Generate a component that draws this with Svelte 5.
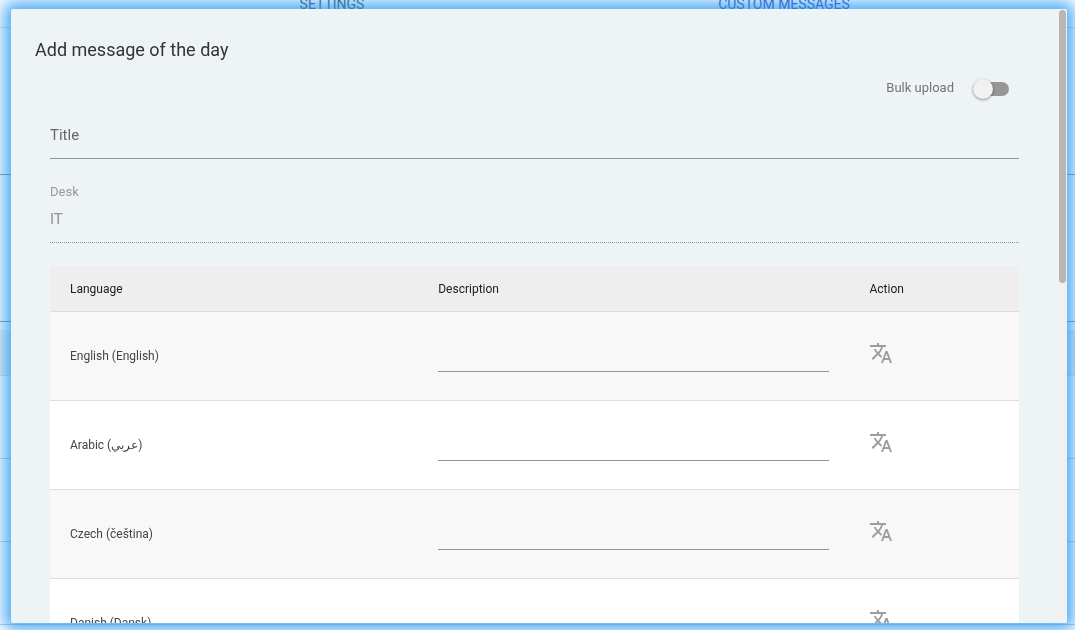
<script lang="ts">
	type Translation = {
		code: string;
		label: string;
		text: string;
	};

	let bulkUpload = $state(false);
	let title = $state('');
	let desk = $state('IT');
	let translations = $state<Translation[]>([
		{ code: 'en', label: 'English (English)', text: '' },
		{ code: 'ar', label: 'Arabic (عربي)', text: '' },
		{ code: 'cs', label: 'Czech (čeština)', text: '' },
		{ code: 'da', label: 'Danish (Dansk)', text: '' }
	]);
</script>

<div class="page">
	<nav class="tabs">
		<a href="#settings">SETTINGS</a>
		<a href="#messages" class="active">CUSTOM MESSAGES</a>
	</nav>
	<div class="section"></div>
	<div class="section"></div>
	<div class="list">
		<div class="list-head"></div>
		<div class="list-row"></div>
		<div class="list-row"></div>
		<div class="list-row"></div>
	</div>
</div>

<div class="dialog" role="dialog" aria-labelledby="dialog-title">
	<div class="content">
		<h2 id="dialog-title">Add message of the day</h2>
		<form>
			<label class="bulk">
				<span>Bulk upload</span>
				<input type="checkbox" class="switch" bind:checked={bulkUpload} />
			</label>

			<input class="field" type="text" aria-label="Title" placeholder="Title" bind:value={title} />

			<label class="desk-label" for="desk">Desk</label>
			<input class="field desk" id="desk" type="text" bind:value={desk} disabled />

			<table>
				<thead>
					<tr>
						<th class="language">Language</th>
						<th class="description">Description</th>
						<th>Action</th>
					</tr>
				</thead>
				<tbody>
					{#each translations as item (item.code)}
						<tr>
							<td>{item.label}</td>
							<td>
								<input type="text" class="text" aria-label="Description, {item.label}" bind:value={item.text} />
							</td>
							<td>
								<button type="button" aria-label="Translate {item.label}">
									<svg viewBox="0 0 24 24" width="24" height="24" aria-hidden="true">
										<path
											d="M12.87 15.07l-2.54-2.51.03-.03c1.74-1.94 2.98-4.17 3.71-6.53H17V4h-7V2H8v2H1v1.99h11.17C11.5 7.92 10.44 9.75 9 11.35 8.07 10.32 7.3 9.19 6.69 8h-2c.73 1.63 1.73 3.17 2.98 4.56l-5.09 5.02L4 19l5-5 3.11 3.11.76-2.04zM18.5 10h-2L12 22h2l1.12-3h4.75L21 22h2l-4.5-12zm-2.62 7l1.62-4.33L19.12 17h-3.24z"
										/>
									</svg>
								</button>
							</td>
						</tr>
					{/each}
				</tbody>
			</table>
		</form>
	</div>
	<div class="scrollbar"><div class="thumb"></div></div>
</div>

<style>
	:global(body) {
		font-family: Roboto, 'Liberation Serif', serif;
		background: #fff;
	}
	* {
		box-sizing: border-box;
	}
	.page {
		height: 100vh;
		overflow: hidden;
	}
	.tabs {
		display: grid;
		grid-template-columns: 1fr 1fr;
		height: 48px;
		margin-top: -20px;
		padding: 0 65px 0 106px;
		align-items: center;
		border-bottom: 1px solid #dadada;
	}
	.tabs a {
		color: #555;
		font-size: 14px;
		text-align: center;
		text-decoration: none;
	}
	.tabs a.active {
		color: #3f51b5;
	}
	.section {
		height: 147px;
		border-bottom: 1px solid #949494;
	}
	.list {
		padding-top: 8px;
	}
	.list-head {
		height: 46px;
		background: #eee;
		border-bottom: 1px solid #ddd;
	}
	.list-row {
		height: 83px;
		border-bottom: 1px solid #ccc;
	}

	.dialog {
		position: fixed;
		inset: 9px 8px 7px 11px;
		display: flex;
		overflow: hidden;
		background: #eef3f6;
		border-radius: 2px;
		box-shadow: 0 0 16px 7px rgba(33, 150, 243, 0.8);
	}
	.content {
		flex: 1;
		min-width: 0;
		padding: 24px;
		overflow: hidden;
	}
	h2 {
		margin: 0;
		color: #333;
		font-size: 18px;
		font-weight: 400;
		line-height: 34px;
	}
	form {
		padding: 0 16px 0 15px;
	}
	.bulk {
		display: flex;
		align-items: center;
		justify-content: flex-end;
		gap: 19px;
		height: 44px;
		padding-right: 10px;
		color: #757575;
		font-size: 13px;
		line-height: 16px;
	}
	.bulk span {
		padding-bottom: 2px;
	}
	.switch {
		position: relative;
		width: 36px;
		height: 14px;
		margin: 0;
		appearance: none;
		background: #969696;
		border-radius: 7px;
	}
	.switch::before {
		content: '';
		position: absolute;
		top: -3px;
		left: 0;
		width: 20px;
		height: 20px;
		background: #f1f1f1;
		border-radius: 50%;
		box-shadow: 0 1px 3px rgba(0, 0, 0, 0.4);
	}
	.switch:checked::before {
		left: 16px;
	}
	input[type='text'] {
		display: block;
		width: 100%;
		padding: 0;
		background: none;
		border: 0;
		border-bottom: 1px solid #949494;
		color: #333;
		font-family: inherit;
		outline: none;
	}
	input.field {
		height: 48px;
		font-size: 15px;
	}
	.field::placeholder {
		color: #666;
		opacity: 1;
	}
	.desk-label {
		display: block;
		margin-top: 25px;
		color: #999;
		font-size: 13px;
		line-height: 16px;
	}
	input.desk {
		height: 43px;
		padding-bottom: 4px;
		border-bottom-style: dotted;
		color: #8f8f9c;
	}
	table {
		width: 100%;
		margin-top: 23px;
		table-layout: fixed;
		border-collapse: separate;
		border-spacing: 0;
		font-size: 12px;
	}
	th,
	td {
		padding: 0 20px;
		border-bottom: 1px solid #ddd;
		text-align: left;
	}
	th {
		height: 46px;
		background: #eee;
		color: #212121;
		font-weight: 400;
	}
	td {
		height: 89px;
		background: #fff;
		color: #444;
	}
	tbody tr:nth-child(odd) td {
		background: #f8f8f8;
	}
	.language {
		width: 38%;
	}
	.description {
		width: 44.5%;
	}
	input.text {
		height: 32px;
		font-size: 12px;
	}
	button {
		display: block;
		padding: 0 0 6px;
		background: none;
		border: 0;
		cursor: pointer;
	}
	svg {
		display: block;
		fill: #9e9e9e;
	}
	.scrollbar {
		width: 8px;
		padding: 1px 1px 0 0;
		background: #f1f1f1;
	}
	.thumb {
		height: 273px;
		background: #bab5b5;
		border-radius: 4px;
	}
</style>
